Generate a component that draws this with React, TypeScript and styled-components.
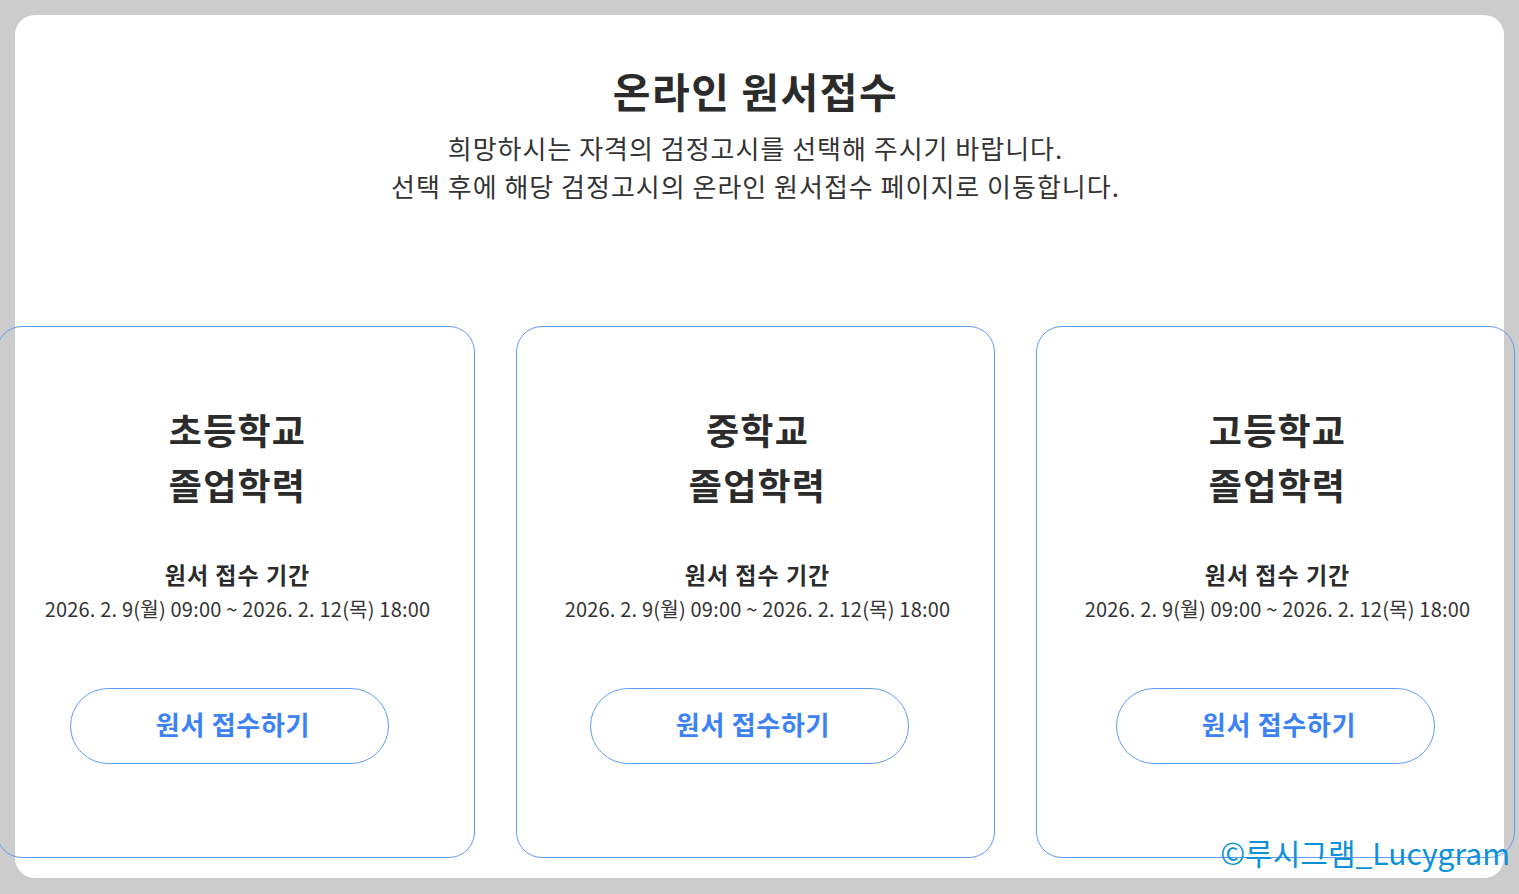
import React from 'react'
import styled, { createGlobalStyle } from 'styled-components'

const GlobalStyle = createGlobalStyle`
  html, body {
    margin: 0;
    padding: 0;
    background: #cccccc;
    font-family: "Noto Sans CJK KR", "Noto Sans", sans-serif;
    color: #333333;
  }
`

const Page = styled.div`
  position: relative;
  box-sizing: border-box;
  min-height: 894px;
  padding: 15px 15px 16px 15px;
`

const Panel = styled.section`
  background: #ffffff;
  border-radius: 20px;
  padding: 51px 0 20px;
  display: flex;
  flex-direction: column;
  align-items: center;
  min-height: 863px;
  box-sizing: border-box;
`

const Title = styled.h1`
  margin: 0 0 0 -8px;
  font-size: 41px;
  line-height: 48px;
  font-weight: 700;
  letter-spacing: 1.5px;
  color: #2b2b2b;
`

const Lead = styled.p`
  margin: 15px 0 0 -8px;
  font-size: 26px;
  line-height: 38px;
  font-weight: 400;
  text-align: center;
  letter-spacing: 1px;
  color: #333333;
`

const CardRow = styled.div`
  display: grid;
  grid-template-columns: repeat(3, 479px);
  column-gap: 41px;
  margin: 121px -10px 0 -19px;
`

const Card = styled.article`
  box-sizing: border-box;
  height: 532px;
  border: 1px solid #5c9cf5;
  border-radius: 26px;
  padding: 75px 0 0 5px;
  display: flex;
  flex-direction: column;
  align-items: center;
`

const CardTitle = styled.h2`
  margin: 0;
  font-size: 36px;
  line-height: 55px;
  font-weight: 700;
  letter-spacing: 1.2px;
  text-align: center;
  color: #2b2b2b;
`

const PeriodLabel = styled.div`
  margin-top: 46px;
  font-size: 23px;
  line-height: 32px;
  font-weight: 700;
  letter-spacing: 1px;
  color: #2b2b2b;
`

const PeriodDate = styled.div`
  margin-top: 3px;
  font-size: 20px;
  line-height: 32px;
  font-weight: 400;
  letter-spacing: 0.2px;
  color: #333333;
`

const ApplyButton = styled.button<{ $nudge: number }>`
  margin-top: 63px;
  margin-left: ${(p) => p.$nudge}px;
  width: 319px;
  height: 76px;
  padding: 0 0 5px 8px;
  border: 1px solid #5c9cf5;
  border-radius: 38px;
  background: #ffffff;
  font-family: inherit;
  font-size: 26px;
  font-weight: 700;
  letter-spacing: 0.7px;
  color: #3b82f6;
  cursor: pointer;
`

const Watermark = styled.div`
  position: absolute;
  right: 9px;
  bottom: 22px;
  font-size: 30px;
  line-height: 40px;
  color: #0a91d9;
`

const schools = [
  { name: '초등학교', nudge: -17 },
  { name: '중학교', nudge: -17 },
  { name: '고등학교', nudge: -5 },
]

export default function App() {
  return (
    <Page>
      <GlobalStyle />
      <Panel>
        <Title>온라인 원서접수</Title>
        <Lead>
          희망하시는 자격의 검정고시를 선택해 주시기 바랍니다.
          <br />
          선택 후에 해당 검정고시의 온라인 원서접수 페이지로 이동합니다.
        </Lead>
        <CardRow>
          {schools.map((s) => (
            <Card key={s.name}>
              <CardTitle>
                {s.name}
                <br />
                졸업학력
              </CardTitle>
              <PeriodLabel>원서 접수 기간</PeriodLabel>
              <PeriodDate>2026. 2. 9(월) 09:00 ~ 2026. 2. 12(목) 18:00</PeriodDate>
              <ApplyButton type="button" $nudge={s.nudge}>원서 접수하기</ApplyButton>
            </Card>
          ))}
        </CardRow>
      </Panel>
      <Watermark>©루시그램_Lucygram</Watermark>
    </Page>
  )
}
